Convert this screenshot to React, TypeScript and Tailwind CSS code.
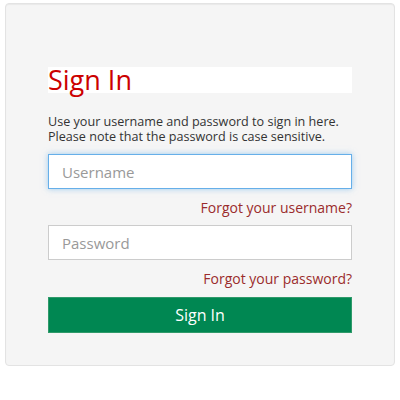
import React from "react";

export default function App() {
  return (
    <div className="w-[400px] h-[400px] bg-white pt-[3px] pl-[5px]" style={{ fontFamily: '"Open Sans", sans-serif' }}>
      <div className="w-[390px] h-[363px] bg-[#f5f5f5] border border-[#e3e3e3] rounded-[4px] shadow-[inset_0_1px_1px_rgba(0,0,0,0.05)] pt-[63px] px-[42px]">
        <div className="h-[26px] bg-white">
          <h2 className="text-[27px] leading-[26px] text-[#cc0000] font-normal">Sign In</h2>
        </div>
        <p className="mt-[21px] text-[12.6px] leading-[15px] text-[#333]">
          Use your username and password to sign in here.<br />
          Please note that the password is case sensitive.
        </p>
        <input
          type="text"
          placeholder="Username"
          className="mt-[10px] block w-full h-[35px] bg-white border border-[#66afe9] shadow-[0_0_6px_rgba(102,175,233,0.6)] px-[13px] text-[15px] text-[#555] placeholder:text-[#999] outline-none"
        />
        <div className="mt-[9px] flex justify-end">
          <a className="text-[14px] leading-[20px] text-[#9b2c2c]">Forgot your username?</a>
        </div>
        <input
          type="password"
          placeholder="Password"
          className="mt-[7px] block w-full h-[35px] bg-white border border-[#ccc] px-[13px] text-[15px] text-[#555] placeholder:text-[#999] outline-none"
        />
        <div className="mt-[9px] flex justify-end">
          <a className="text-[14px] leading-[20px] text-[#9b2c2c]">Forgot your password?</a>
        </div>
        <button className="mt-[8px] block w-full h-[36px] bg-[#008752] border border-[#2f9a6a] text-white text-[16px]">
          Sign In
        </button>
      </div>
    </div>
  );
}
